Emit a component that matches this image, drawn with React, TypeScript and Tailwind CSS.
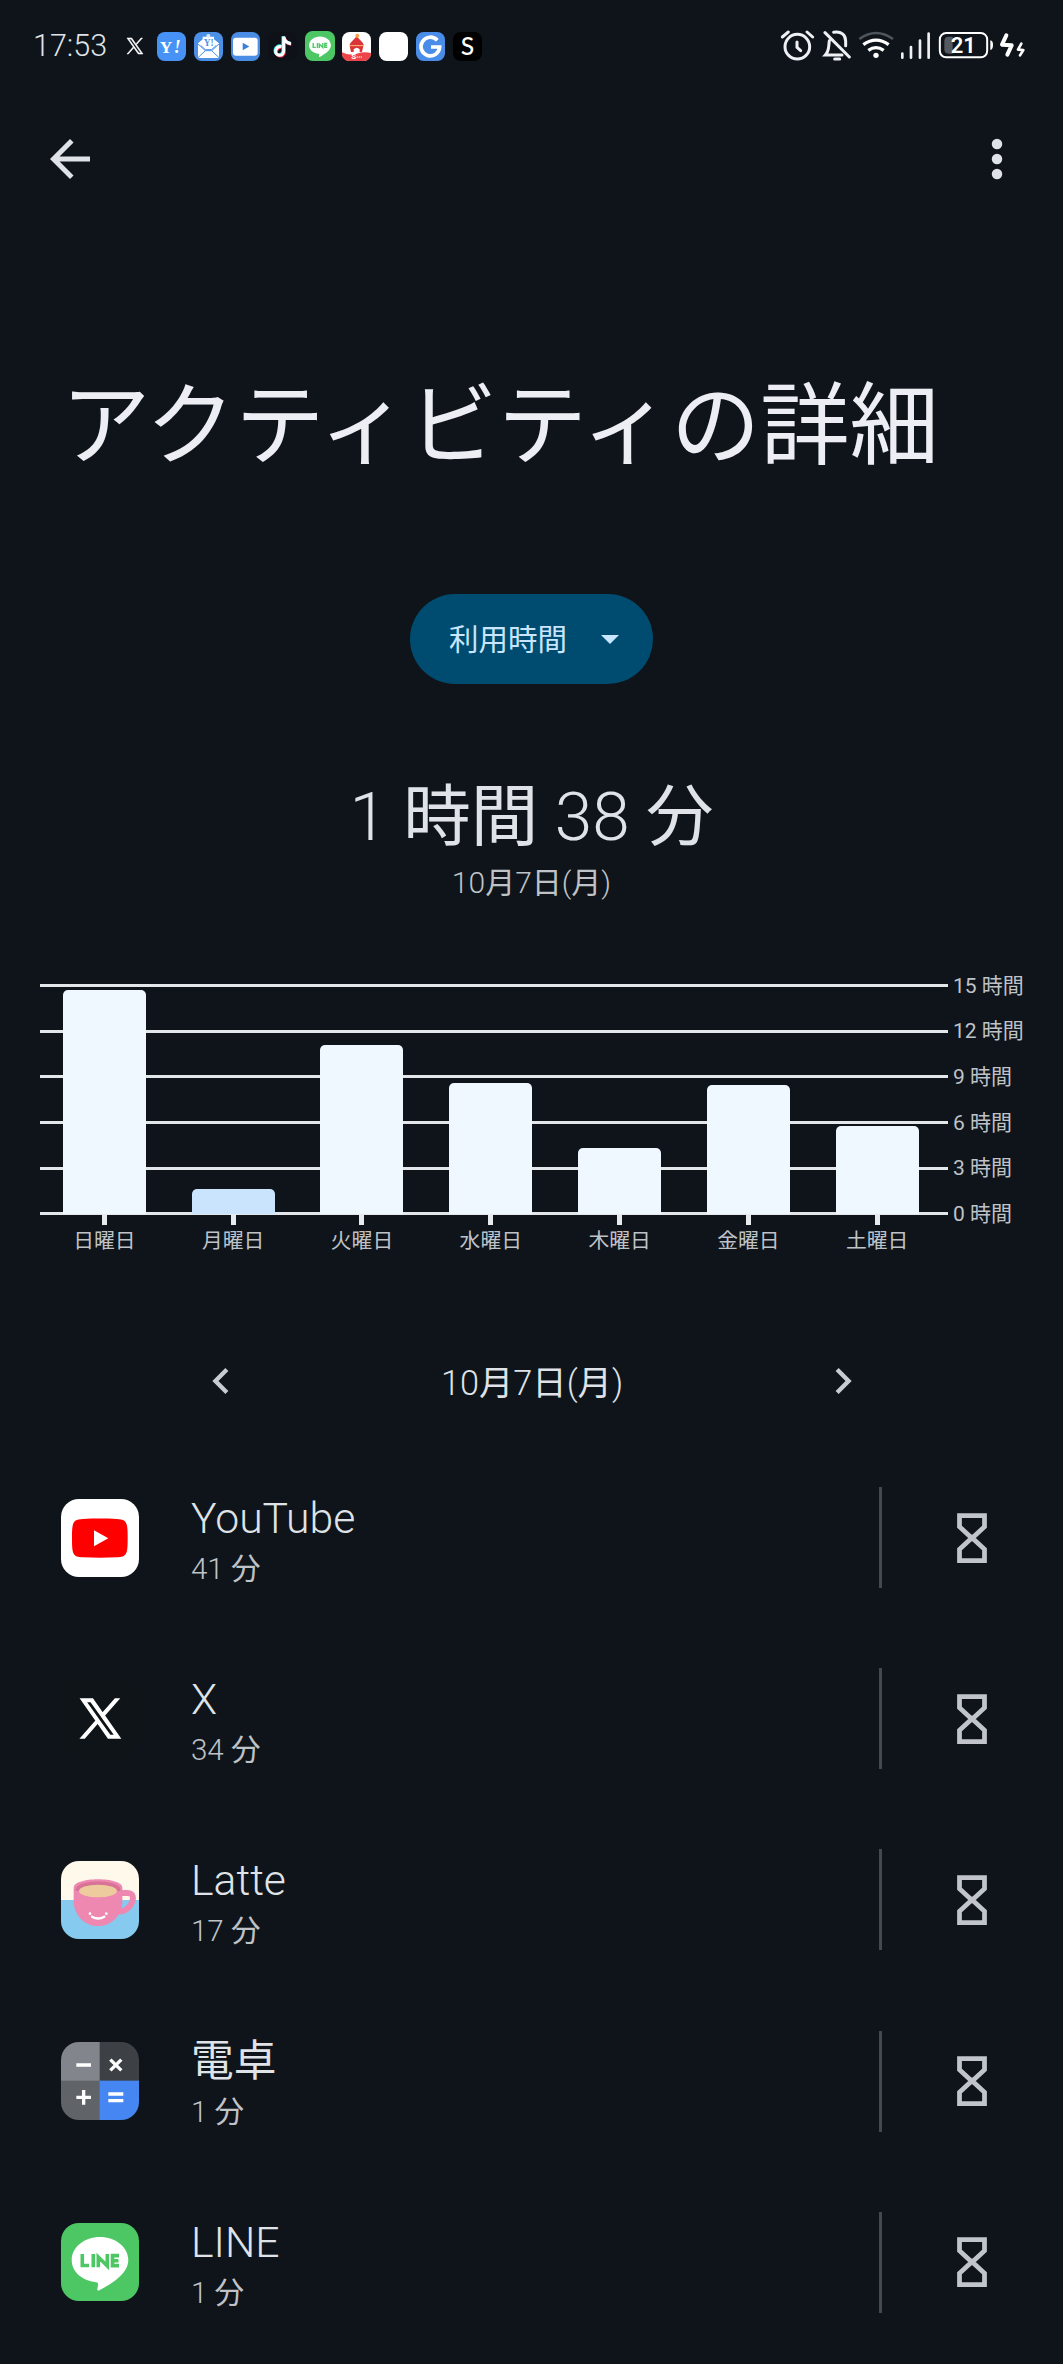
import type { ReactNode } from "react";

const ink = "#dfe3e8";

/* Latin and digits keep the light weight, kanji are set in regular. */
function Mixed({ text }: { text: string }) {
  return (
    <>
      {text.split(/([\u4e00-\u9fff]+)/).map((part, i) =>
        i % 2 === 1 ? (
          <span key={i} className="font-normal">
            {part}
          </span>
        ) : (
          part
        ),
      )}
    </>
  );
}

function XLogo({ className }: { className: string }) {
  return (
    <svg viewBox="0 0 24 24" className={className} fill="#fff" stroke="#fff" strokeWidth="0.9">
      <path d="M14.258 10.152L23.176 0h-2.113l-7.747 8.813L7.133 0H0l9.352 13.328L0 23.973h2.113l8.176-9.309 6.531 9.309h7.133zm-2.895 3.293l-.949-1.328L2.875 1.56h3.246l6.086 8.523.945 1.328 7.91 11.078h-3.246z" />
    </svg>
  );
}

function LineLogo({ className, radius }: { className: string; radius: number }) {
  return (
    <svg viewBox="0 0 78 78" className={className}>
      <rect width="78" height="78" rx={radius} fill="#4cc764" />
      <path d="M39 14C23.500 14 10.700 24 10.700 37c0 12 10.300 20.500 24.300 22.200 1.800.3 2.300 1 2 2.800l-.7 4.200c-.2 1.500.6 1.900 2 1.100C50 61 67.300 51 67.300 37 67.300 24 54.500 14 39 14z" fill="#fff" />
      <g fill="none" stroke="#4cc764" strokeWidth="3.600">
        <path d="M21.300 31v11.500h6.700M32.300 31v13.300M37.300 44.300V34l9 9V31M58 32.600h-6.500v10h6.500M51.500 37.700h6" />
      </g>
    </svg>
  );
}

function StatusTile({ bg, children }: { bg: string; children?: ReactNode }) {
  return (
    <svg viewBox="0 0 87 87" className="h-[29px] w-[29px]">
      <rect width="87" height="87" rx="23" fill={bg} />
      {children}
    </svg>
  );
}

function NotificationIcons() {
  return (
    <div className="ml-[22px] flex h-[30px] items-center">
      <XLogo className="mr-[14px] h-[16px] w-[16px] overflow-visible" />
      <div className="flex items-center gap-[7.9px]">
        <StatusTile bg="#4793f5">
          <text x="8" y="62" fontFamily="Liberation Serif" fontWeight="700" fontSize="52" fill="#fff">Y</text>
          <text x="50" y="62" fontFamily="Liberation Serif" fontWeight="700" fontStyle="italic" fontSize="54" fill="#fff">!</text>
        </StatusTile>
        <StatusTile bg="#4b90e6">
          <path d="M12 34L26 22V14H60V22L75 34V78H12Z" fill="#fff" />
          <path d="M12 36L34 56L12 77M75 36L53 56L75 77M34 56H53M20 40L34 53H53L67 40" fill="none" stroke="#4b90e6" strokeWidth="3" />
          <text x="29" y="42" fontFamily="Liberation Serif" fontWeight="700" fontSize="28" fill="#4b90e6">Y!</text>
          <circle cx="43" cy="12" r="6" fill="#dcecff" />
        </StatusTile>
        <StatusTile bg="#4b8de4">
          <rect x="6" y="17" width="74" height="54" rx="9" fill="#fff" />
          <path d="M35 32L55 43.500L35 55Z" fill="#3b7fd8" />
        </StatusTile>
        <StatusTile bg="#0f1118">
          <g fill="none" strokeWidth="9">
            <path d="M39 42C20 38 14 65 31 68C40 69 45 63 45 55V13C48 25 56 32 67 33" stroke="#25f4ee" />
            <path d="M43 46C24 42 18 69 35 72C44 73 49 67 49 59V17C52 29 60 36 70 37" stroke="#fe2c55" />
            <path d="M41 44C22 40 16 67 33 70C42 71 47 65 47 57V14C50 27 58 34 69 35" stroke="#fff" />
          </g>
        </StatusTile>
        <LineLogo className="h-[30px] w-[30px]" radius={20} />
        <StatusTile bg="#fff">
          <path d="M0 61Q22 72 44 65Q66 58 87 63V64C87 78 79 87 64 87H23C8 87 0 78 0 64Z" fill="#ee4449" />
          <path d="M44 13L62 32L66 40H22L26 32ZM23 42H64L60 60H53V52Q44 42 35 52V60H27Z" fill="#dc3338" />
          <path d="M24 41H64" stroke="#f3a05b" strokeWidth="3" />
          <circle cx="46" cy="11" r="6" fill="#f8a345" />
          <text x="28" y="80" fontFamily="Roboto" fontWeight="700" fontSize="24" fill="#fff">S</text>
          <path d="M44 75H62" stroke="#fff" strokeWidth="3" strokeDasharray="4 2" />
        </StatusTile>
        <StatusTile bg="#fff" />
        <StatusTile bg="#4a8de8">
          <path d="M64 25A28 28 0 1 0 71 45H45" fill="none" stroke="#fff" strokeWidth="11" />
        </StatusTile>
        <StatusTile bg="#000">
          <text x="43.500" y="70" textAnchor="middle" fontFamily="Lato" fontWeight="500" fontSize="74" fill="#fff">S</text>
        </StatusTile>
      </div>
    </div>
  );
}

function SystemIcons() {
  return (
    <div className="ml-auto flex h-[34px] items-center">
      {/* alarm */}
      <svg viewBox="122 84 108 102" className="h-[34px] w-[36px]" fill="none" stroke="#eef0f3" strokeWidth="9" strokeLinecap="round">
        <circle cx="174" cy="137" r="37" />
        <path d="M173 123V139L184 149M129 108L147 93M203 93L220 108" />
      </svg>
      {/* silenced bell */}
      <svg viewBox="248 84 90 102" className="ml-[6px] h-[34px] w-[30px]" fill="none" stroke="#eef0f3" strokeWidth="9" strokeLinecap="round">
        <path d="M257 95L330 168M283 94C306 90 319 102 319 120V134M270 119C267 140 270 149 258 162H308" />
        <path d="M286 174H301" />
      </svg>
      {/* wifi */}
      <svg viewBox="354 84 114 102" className="ml-[5.300px] h-[34px] w-[38px]" fill="none" stroke="#fff" strokeWidth="8">
        <path d="M361 114Q411 78 462 114" stroke="#50555b" />
        <path d="M373 131Q411 104 449 131M388 148Q411 132 434 148" strokeWidth="10" />
        <circle cx="411" cy="163" r="8" fill="#fff" stroke="none" />
      </svg>
      {/* signal */}
      <svg viewBox="480 84 100 102" className="ml-1 h-[34px] w-[33.300px]" stroke="#eef0f3" strokeWidth="8" strokeLinecap="round">
        <path d="M490 158V170M516 138V170M543 119V170M569 98V170" />
      </svg>
      {/* battery */}
      <svg viewBox="598 84 168 102" className="ml-[6px] h-[34px] w-[56px]">
        <path d="M642 107H630Q617 107 617 120V145Q617 158 630 158H642Z" fill="#555960" />
        <rect x="603.500" y="96" width="142" height="73" rx="19" fill="none" stroke="#fff" strokeWidth="6" />
        <path d="M755 118Q763 119 763 132T755 147Z" fill="#fff" />
        <text x="674" y="156" textAnchor="middle" fontFamily="Roboto" fontWeight="600" fontSize="66" fill="#fff">21</text>
      </svg>
      {/* charging bolts */}
      <svg viewBox="776 84 86 102" className="ml-[4px] h-[34px] w-[28.700px]" fill="none" stroke="#fff" strokeLinejoin="round" strokeLinecap="round">
        <path d="M801 103L788 131L817 133L804 161" strokeWidth="12" />
        <path d="M846 128L836 146L852 147L842 163" strokeWidth="8" />
      </svg>
    </div>
  );
}

const bars = [
  { day: "日曜日", height: 224, selected: false },
  { day: "月曜日", height: 25.5, selected: true },
  { day: "火曜日", height: 169, selected: false },
  { day: "水曜日", height: 131.5, selected: false },
  { day: "木曜日", height: 66.5, selected: false },
  { day: "金曜日", height: 129.5, selected: false },
  { day: "土曜日", height: 88, selected: false },
];

const hours = ["15", "12", "9", "6", "3", "0"];

function UsageChart() {
  return (
    <div className="relative mt-[60px] h-[290px] w-full shrink-0 font-normal">
      <div className="flex h-[278px] flex-col pl-10">
        {hours.map((h) => (
          <div key={h} className="flex h-[45.600px] shrink-0 items-center">
            <div className="h-[3px] w-[908px] bg-[#e4e7ea]" />
            <span className="ml-[5px] text-[21px] leading-[24px] whitespace-nowrap text-[#bfc3c8]">{h} 時間</span>
          </div>
        ))}
      </div>
      {/* bars stand on the zero line, over the grid */}
      <div className="absolute top-0 left-[40px] flex">
        {bars.map((b) => (
          <div key={b.day} className="flex w-[128.800px] flex-col items-center">
            <div className="flex h-[251px] w-[83px] items-end">
              <div
                className={b.selected ? "w-full rounded-t-[5px] bg-[#cbe4fe]" : "w-full rounded-t-[5px] bg-[#eff7ff]"}
                style={{ height: b.height }}
              />
            </div>
            <div className="h-[11px] w-[5px] bg-[#e8ebee]" />
            <span className="mt-[4px] text-[20.800px] leading-[24px] text-[#bfc3c8]">{b.day}</span>
          </div>
        ))}
      </div>
    </div>
  );
}

function YouTubeIcon() {
  return (
    <svg viewBox="0 0 234 234" className="h-[78px] w-[78px]">
      <rect width="234" height="234" rx="54" fill="#fff" />
      <path d="M33 117C33 70 35 61 66 60C100 58 134 58 167 60C198 61 200 70 200 117C200 165 198 174 167 175C134 177 100 177 66 175C35 174 33 165 33 117Z" fill="#f00" />
      <path d="M99 94L142 118L99 142Z" fill="#fff" />
    </svg>
  );
}

function XIcon() {
  return (
    <div className="flex h-[78px] w-[78px] items-center justify-center rounded-[18px] bg-[#0f1418]">
      <XLogo className="h-[39px] w-[41px] overflow-visible" />
    </div>
  );
}

function LatteIcon() {
  return (
    <svg viewBox="0 0 234 234" className="h-[78px] w-[78px]">
      <defs>
        <clipPath id="latte"><rect width="234" height="234" rx="54" /></clipPath>
      </defs>
      <g clipPath="url(#latte)">
        <rect width="234" height="117" fill="#fff9ec" />
        <rect y="117" width="234" height="117" fill="#86caf0" />
        <path d="M180 96H200C225 96 216 125 204 138C195 148 185 153 172 151" fill="none" stroke="#ee88b1" strokeWidth="18" />
        <path d="M38 80C38 46 184 46 184 80V122C184 154 158 195 111 195C64 195 38 154 38 122Z" fill="#ee88b1" />
        <path d="M44 90C34 52 188 52 178 90Z" fill="#d87398" />
        <ellipse cx="111" cy="90" rx="57" ry="19" fill="#eecb9d" />
        <path d="M93 167Q111 178 130 167" fill="none" stroke="#fff" strokeWidth="7" strokeLinecap="round" />
        <circle cx="87" cy="158" r="4" fill="#fff" />
        <circle cx="136" cy="158" r="4" fill="#fff" />
      </g>
    </svg>
  );
}

function CalculatorIcon() {
  return (
    <svg viewBox="0 0 234 234" className="h-[78px] w-[78px]">
      <defs>
        <clipPath id="calculator"><rect width="234" height="234" rx="54" /></clipPath>
      </defs>
      <g clipPath="url(#calculator)">
        <rect width="117" height="117" fill="#82868c" />
        <rect x="116" width="118" height="117" fill="#3d4145" />
        <rect y="116" width="117" height="118" fill="#606368" />
        <rect x="116" y="116" width="118" height="118" fill="#4586f3" />
        <path d="M46 69H90M148 53L181 85M181 53L148 85M46 166H90M68 144V188M142 156H187M142 176H187" stroke="#fff" strokeWidth="10" />
      </g>
    </svg>
  );
}

function Hourglass() {
  return (
    <svg viewBox="0 0 24 40" className="h-[50px] w-[30px]" fill="none" stroke="#c1c5cb" strokeWidth="3.800">
      <path d="M2 2H22V11L12 20.200L2 11ZM2 38H22V29L12 19.800L2 29Z" />
    </svg>
  );
}

const apps = [
  { name: "YouTube", time: "41 分", icon: <YouTubeIcon /> },
  { name: "X", time: "34 分", icon: <XIcon /> },
  { name: "Latte", time: "17 分", icon: <LatteIcon /> },
  { name: "電卓", time: "1 分", icon: <CalculatorIcon /> },
  { name: "LINE", time: "1 分", icon: <LineLogo className="h-[78px] w-[78px]" radius={18} /> },
];

export default function App() {
  return (
    <div className="flex h-[2364px] w-[1063px] flex-col overflow-hidden bg-[#0f141a] font-['Roboto','Noto_Sans_CJK_JP',sans-serif] font-light text-[#dfe3e8]">
      <div className="flex h-[92px] shrink-0 items-center pr-[36px] pl-[33px]">
        <span className="w-[72px] text-[30.500px] leading-[36px] whitespace-nowrap">17:53</span>
        <NotificationIcons />
        <SystemIcons />
      </div>

      <header className="flex h-[134px] shrink-0 items-center justify-between pr-[36px] pl-[40px]">
        <svg viewBox="0 0 24 24" className="h-[60px] w-[60px]" fill={ink}>
          <path d="M20 11H7.830l5.590-5.590L12 4l-8 8 8 8 1.410-1.410L7.830 13H20v-2z" />
        </svg>
        <svg viewBox="0 0 24 24" className="h-[60px] w-[60px]" fill={ink}>
          <circle cx="12" cy="6" r="2.100" />
          <circle cx="12" cy="12" r="2.100" />
          <circle cx="12" cy="18" r="2.100" />
        </svg>
      </header>

      <h1 className="mt-[141px] h-[120px] shrink-0 pl-[61px] text-[89.300px] leading-[120px] font-normal whitespace-nowrap text-[#eceef4]">
        アクティビティの詳細
      </h1>

      <button className="mt-[107px] flex h-[90px] w-[243px] shrink-0 items-center self-center rounded-full bg-[#004c70] pl-[39px] text-[29.500px] font-normal text-[#c8e6ff]">
        <span className="mt-[2px] leading-[40px]">利用時間</span>
        <svg viewBox="0 0 18 9" className="ml-[34px] h-[9px] w-[18px]" fill="#c8e6ff">
          <path d="M0 0H18L9 9Z" />
        </svg>
      </button>

      <div className="mt-[88px] h-[90px] shrink-0 text-center text-[67.500px] leading-[90px] whitespace-nowrap">
        <Mixed text="1 時間 38 分" />
      </div>
      <div className="mt-px h-[40px] shrink-0 text-center text-[30px] leading-[40px] text-[#bfc3c8]">
        <Mixed text="10月7日(月)" />
      </div>

      <UsageChart />

      <div className="mt-[100px] flex h-[60px] shrink-0 items-center justify-between pr-[194px] pl-[195px]">
        <svg viewBox="0 0 24 24" className="mb-[4px] h-[52px] w-[52px]" fill="#c8ccd0">
          <path d="M15.410 7.410L14 6l-6 6 6 6 1.410-1.410L10.830 12z" />
        </svg>
        <span className="text-[34.300px] leading-[44px]">
          <Mixed text="10月7日(月)" />
        </span>
        <svg viewBox="0 0 24 24" className="mb-[4px] h-[52px] w-[52px]" fill="#c8ccd0">
          <path d="M8.590 16.590L10 18l6-6-6-6-1.410 1.410L13.170 12z" />
        </svg>
      </div>

      <ul className="mt-[34px] flex flex-col">
        {apps.map((a) => (
          <li key={a.name} className="flex h-[181.200px] shrink-0 items-center pl-[61px]">
            {a.icon}
            <div className="mt-[6px] ml-[52px] flex w-[688px] flex-col">
              <span className="text-[42.700px] leading-[54px]">
                <Mixed text={a.name} />
              </span>
              <span className="mt-[2px] text-[29.500px] leading-[44px] text-[#bfc3c8]">
                <Mixed text={a.time} />
              </span>
            </div>
            <div className="h-[101px] w-[3px] bg-[#45484c]" />
            <div className="ml-[75px]">
              <Hourglass />
            </div>
          </li>
        ))}
      </ul>
    </div>
  );
}
